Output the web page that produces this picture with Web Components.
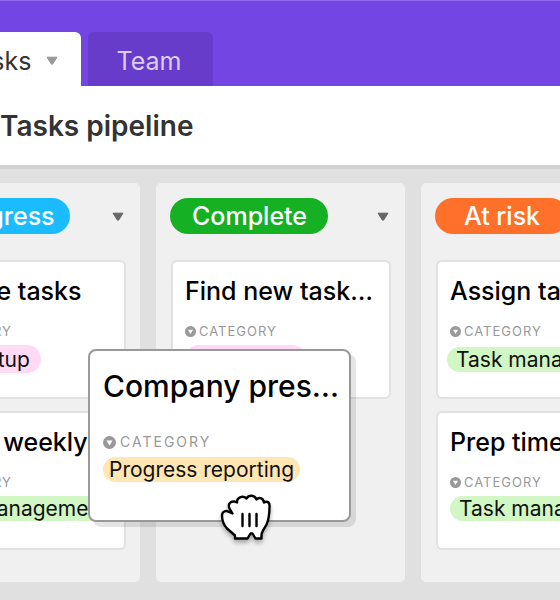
<!DOCTYPE html>
<html lang="en">
<head>
<meta charset="utf-8">
<title>Tasks pipeline</title>
<style>
  html, body { margin: 0; min-height: 100%; }
  body { font-family: Inter, "Liberation Sans", sans-serif; color: #333; background: #e0e0e0; }
</style>
</head>
<body>
<pipeline-app></pipeline-app>
<script>
  function define(name, html) {
    const template = document.createElement('template');
    template.innerHTML = html;
    customElements.define(name, class extends HTMLElement {
      constructor() {
        super();
        this.attachShadow({ mode: 'open' }).append(template.content.cloneNode(true));
      }
    });
  }

  define('caret-icon', `
    <style>
      :host { display: block; width: 12px; color: #999; }
      svg { display: block; width: 100%; }
    </style>
    <svg viewBox="0 0 12 10" aria-hidden="true"><path d="M1 1.200h10L6.700 8q-.7.8-1.400 0z" fill="currentColor" stroke="currentColor" stroke-linejoin="round"/></svg>`);

  define('nav-tab', `
    <style>
      :host { display: block; }
      button { display: flex; align-items: center; gap: 15px; box-sizing: border-box; height: 54px; margin: 0; border: 0; border-radius: 6px 6px 0 0;
        padding: 4px 32px 0 28px; font: 400 25px/30px Inter, sans-serif; color: #dacdf6; background: #683ccb; white-space: nowrap; }
      :host([selected]) button { padding: 4px 23px 0 24px; background: #fff; color: #333; }
    </style>
    <button type="button" role="tab"><slot></slot></button>`);

  define('app-header', `
    <style>
      :host { display: block; }
      nav { display: flex; align-items: flex-end; gap: 7px; box-sizing: border-box; height: 86px; margin-left: -61px; background: #7346e3; border-top: 1px solid #8e68ea; }
      header { box-sizing: border-box; padding: 24px 0 23px; background: #fff; border-bottom: 4px solid #d1d1d1; }
      h1 { margin: 0; font: 600 28px/32px Inter, sans-serif; color: #333; }
    </style>
    <nav role="tablist"><slot name="tab"></slot></nav>
    <header><h1><slot></slot></h1></header>`);

  define('status-pill', `
    <style>
      :host { display: block; box-sizing: border-box; height: 36px; border-radius: 18px; padding: 0 21px 0 22px;
        font: 500 25px/36px Inter, sans-serif; color: #fff; background: #15b024; white-space: nowrap; }
      :host([tone="blue"]) { background: #1abcff; padding: 0 15px; }
      :host([tone="orange"]) { background: #ff702a; padding: 0 28px 0 29px; }
    </style>
    <slot></slot>`);

  define('field-label', `
    <style>
      :host { display: flex; align-items: center; gap: 3px; font: 400 13px/14px Inter, sans-serif; letter-spacing: 1px; color: #999; }
      svg { width: 11px; height: 11px; }
      :host([large]) { gap: 4px; font-size: 14px; line-height: 16px; letter-spacing: 2px; }
      :host([large]) svg { width: 13px; height: 13px; }
    </style>
    <svg viewBox="0 0 12 12" aria-hidden="true"><circle cx="6" cy="6" r="6" fill="#999"/><path d="M3.2 4.2h5.6L6 8.8z" fill="#fff"/></svg>
    <slot></slot>`);

  define('category-tag', `
    <style>
      :host { display: inline-block; height: 25px; border-radius: 13px; padding: 0 9px;
        font: 400 21px/25px Inter, sans-serif; color: #111; background: #d1f7c4; white-space: nowrap; }
      :host([tone="pink"]) { height: 28px; border-radius: 14px; line-height: 29px; padding: 0 11px; background: #ffdaf6; }
      :host([tone="amber"]) { background: #ffe6b2; padding: 0 6px; }
    </style>
    <slot></slot>`);

  define('task-card', `
    <style>
      :host { display: block; box-sizing: border-box; min-height: 139px; border: 2px solid #e1e1e1; border-radius: 6px; padding: 14px 0 0 12px; background: #fff; overflow: hidden; }
      h3 { margin: 0 0 18px; font: 500 25px/30px Inter, sans-serif; color: #000; white-space: nowrap; }
      slot[name="tag"] { display: block; margin-top: 7px; white-space: nowrap; }
      :host([spaced]) slot[name="tag"] { margin-top: 9px; }
      :host([raised]) { min-height: 173px; padding: 18px 0 0 13px; border-color: #999; border-radius: 8px; box-shadow: 5px 5px 0 rgba(0,0,0,.1); }
      :host([raised]) h3 { margin-bottom: 31px; font-size: 30px; line-height: 34px; }
    </style>
    <h3><slot></slot></h3>
    <slot name="label"></slot>
    <slot name="tag"></slot>`);

  define('board-column', `
    <style>
      :host { display: block; position: relative; box-sizing: border-box; flex: none; width: 249px; padding: 15px 14px 32px; border-radius: 5px; background: #f0f0f0; }
      header { display: flex; justify-content: space-between; align-items: center; height: 36px; margin-bottom: 26px; }
      button { margin: 0 2px 0 0; padding: 1px 0 0; border: 0; background: none; }
      caret-icon { color: #666; }
      .cards { display: grid; gap: 12px; padding-left: 1px; }
    </style>
    <header><slot name="status"></slot><button type="button" aria-label="Column options"><caret-icon></caret-icon></button></header>
    <div class="cards"><slot></slot></div>
    <slot name="overlay"></slot>`);

  define('grab-hand', `
    <style>
      :host { display: block; width: 54px; height: 54px; filter: drop-shadow(0 3px 2px rgba(0,0,0,.3)); }
      svg { display: block; }
    </style>
    <svg width="54" height="54" viewBox="0 0 54 54" fill="none" stroke="#000" stroke-width="2.4" stroke-linejoin="round" stroke-linecap="round" aria-hidden="true">
      <path fill="#fff" d="M16 48.500V45.500L8 38.500C4.500 34.500 3 30 3 25.500C3 21.500 7 20 10 22L13.500 23.500L10.500 18.500C8.500 14 11.500 11 15.500 11.500L18 12.500C17.500 7.500 23.500 5 27.500 8.500C30 4.500 35.500 5 37.500 9.500C40.500 6.500 44.500 8.500 45 12.500C49 10.500 51 13 50.500 17C50.500 25 50 29 47.500 34.500C45 39 42.500 42 42.500 45V48.500H36.500L33.500 43.500H31.500L28.500 48.500Z"/>
      <path d="M23.500 24V36M30.500 24V36M37.500 24V36"/>
    </svg>`);

  define('pipeline-app', `
    <style>
      :host { display: block; overflow: hidden; }
      main { display: flex; align-items: stretch; gap: 16px; margin-left: -109px; padding: 14px 0 19px; }
      .dragged { position: absolute; left: -68px; top: 166px; width: 263px; }
      .cursor { position: absolute; left: 63px; top: 307px; }
      .wide { margin-left: -3px; }
    </style>
    <app-header>
      <nav-tab slot="tab" selected>Tasks <caret-icon></caret-icon></nav-tab>
      <nav-tab slot="tab">Team</nav-tab>
      Tasks pipeline
    </app-header>
    <main>
      <board-column>
        <status-pill slot="status" tone="blue">In progress</status-pill>
        <task-card>Finalize tasks<field-label slot="label">CATEGORY</field-label><category-tag slot="tag" tone="pink">Site setup</category-tag></task-card>
        <task-card>Check weekly goals<field-label slot="label">CATEGORY</field-label><category-tag slot="tag" class="wide">Task management</category-tag></task-card>
      </board-column>
      <board-column>
        <status-pill slot="status">Complete</status-pill>
        <task-card>Find new task…<field-label slot="label">CATEGORY</field-label><category-tag slot="tag" tone="pink">Site setup</category-tag></task-card>
        <task-card slot="overlay" class="dragged" raised>Company pres…<field-label slot="label" large>CATEGORY</field-label><category-tag slot="tag" tone="amber">Progress reporting</category-tag></task-card>
        <grab-hand slot="overlay" class="cursor"></grab-hand>
      </board-column>
      <board-column>
        <status-pill slot="status" tone="orange">At risk</status-pill>
        <task-card spaced>Assign tasks<field-label slot="label">CATEGORY</field-label><category-tag slot="tag" class="wide">Task management</category-tag></task-card>
        <task-card>Prep timeline<field-label slot="label">CATEGORY</field-label><category-tag slot="tag">Task management</category-tag></task-card>
      </board-column>
    </main>`);
</script>
</body>
</html>
